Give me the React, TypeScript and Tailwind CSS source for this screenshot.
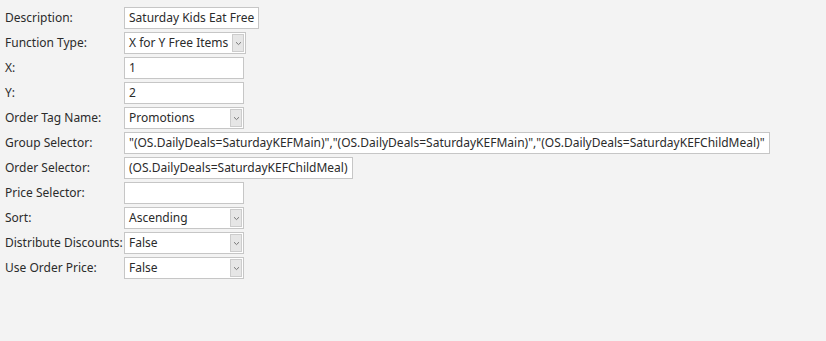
import React from "react";

interface FieldRow {
  label: string;
  value: string;
  kind: "text" | "select";
  width?: string;
}

const rows: FieldRow[] = [
  { label: "Description:", value: "Saturday Kids Eat Free", kind: "text" },
  { label: "Function Type:", value: "X for Y Free Items", kind: "select", width: "w-[122px]" },
  { label: "X:", value: "1", kind: "text", width: "w-[120px]" },
  { label: "Y:", value: "2", kind: "text", width: "w-[120px]" },
  { label: "Order Tag Name:", value: "Promotions", kind: "select", width: "w-[120px]" },
  {
    label: "Group Selector:",
    value:
      '"(OS.DailyDeals=SaturdayKEFMain)","(OS.DailyDeals=SaturdayKEFMain)","(OS.DailyDeals=SaturdayKEFChildMeal)"',
    kind: "text",
  },
  { label: "Order Selector:", value: "(OS.DailyDeals=SaturdayKEFChildMeal)", kind: "text" },
  { label: "Price Selector:", value: "", kind: "text", width: "w-[120px]" },
  { label: "Sort:", value: "Ascending", kind: "select", width: "w-[120px]" },
  { label: "Distribute Discounts:", value: "False", kind: "select", width: "w-[120px]" },
  { label: "Use Order Price:", value: "False", kind: "select", width: "w-[120px]" },
];

const Chevron = () => (
  <svg width="7" height="5" viewBox="0 0 7 5" fill="none">
    <path d="M1 1.2 L3.5 3.6 L6 1.2" stroke="#777" strokeWidth="1" />
  </svg>
);

const Field: React.FC<{ row: FieldRow }> = ({ row }) => {
  const widthClass = row.width ? row.width : "w-fit";
  return (
    <div
      className={`${widthClass} h-[22px] bg-white border border-[#c6c6c6] flex items-center justify-between`}
    >
      <span className="px-[4px] whitespace-nowrap text-[#2b2b2b]">{row.value}</span>
      {row.kind === "select" && (
        <span className="mr-[1px] h-[18px] w-[12px] bg-[#e6e6e6] border border-[#cccccc] flex items-center justify-center shrink-0">
          <Chevron />
        </span>
      )}
    </div>
  );
};

export default function App() {
  return (
    <div
      className="w-[826px] h-[341px] bg-[#f3f3f3] pt-[7px] pl-[5px] text-[12px]"
      style={{ fontFamily: '"Noto Sans", sans-serif' }}
    >
      <div className="grid grid-cols-[119px_auto] gap-y-[3px] items-center justify-start">
        {rows.map((row) => (
          <React.Fragment key={row.label}>
            <div className="text-[#2b2b2b] whitespace-nowrap">{row.label}</div>
            <Field row={row} />
          </React.Fragment>
        ))}
      </div>
    </div>
  );
}
